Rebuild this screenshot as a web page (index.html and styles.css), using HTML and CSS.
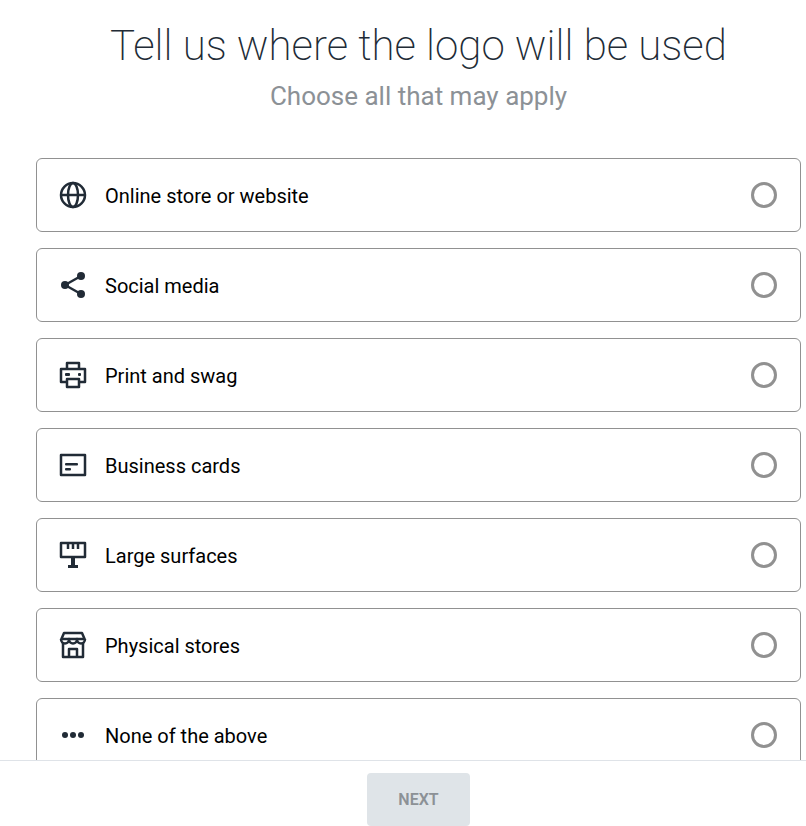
FILE: index.html
```html
<!DOCTYPE html>
<html lang="en">
<head>
<meta charset="utf-8">
<meta name="viewport" content="width=device-width, initial-scale=1">
<title>Logo usage</title>
<link rel="stylesheet" href="styles.css">
</head>
<body>
<form class="page">
  <main class="content">
    <header class="heading">
      <h1 class="title">Tell us where the logo will be used</h1>
      <p class="subtitle">Choose all that may apply</p>
    </header>
    <div class="options">
      <label class="option">
        <svg class="icon" viewBox="0 0 28 28" aria-hidden="true"><g class="line"><circle cx="14" cy="14" r="12"/><ellipse cx="14" cy="14" rx="5" ry="12"/><path d="M2 14h24"/></g></svg>
        <span class="name">Online store or website</span>
        <input class="check" type="checkbox" name="use" value="online">
      </label>
      <label class="option">
        <svg class="icon" viewBox="0 0 28 28" aria-hidden="true"><path class="line" d="M22 5 6 14l16 9"/><circle cx="22" cy="5" r="4"/><circle cx="6" cy="14" r="4"/><circle cx="22" cy="23" r="4"/></svg>
        <span class="name">Social media</span>
        <input class="check" type="checkbox" name="use" value="social">
      </label>
      <label class="option">
        <svg class="icon" viewBox="0 0 28 28" aria-hidden="true"><g class="line"><path d="M8 8V2h12v6"/><path d="M7 21H2V8h24v13h-5"/><path d="M8 18h12v8H8z"/></g><rect x="6" y="12" width="5" height="3" rx="1"/><rect x="19" y="12" width="3" height="3" rx="1"/></svg>
        <span class="name">Print and swag</span>
        <input class="check" type="checkbox" name="use" value="print">
      </label>
      <label class="option">
        <svg class="icon" viewBox="0 0 28 28" aria-hidden="true"><path class="line" d="M2 4h24v20H2z"/><rect x="6" y="12" width="13" height="2.500" rx="1"/><rect x="6" y="17" width="6" height="2.500" rx="1"/></svg>
        <span class="name">Business cards</span>
        <input class="check" type="checkbox" name="use" value="cards">
      </label>
      <label class="option">
        <svg class="icon" viewBox="0 0 28 28" aria-hidden="true"><path class="line" d="M2 2h24v14H2zM9 2v6M14 2v6M19 2v6"/><path d="M12 16h4v8h3v3H9v-3h3z"/></svg>
        <span class="name">Large surfaces</span>
        <input class="check" type="checkbox" name="use" value="surfaces">
      </label>
      <label class="option">
        <svg class="icon" viewBox="0 0 28 28" aria-hidden="true"><g class="line"><path d="M2 9l3-7h18l3 7"/><path d="M2 8h24"/><path d="M2 8c0 6 8 6 8 0 0 6 8 6 8 0 0 6 8 6 8 0"/><path d="M4 12v14h20V12M10 26v-8h8v8"/></g></svg>
        <span class="name">Physical stores</span>
        <input class="check" type="checkbox" name="use" value="stores">
      </label>
      <label class="option">
        <svg class="icon" viewBox="0 0 28 28" aria-hidden="true"><circle cx="6" cy="14" r="3"/><circle cx="14" cy="14" r="3"/><circle cx="22" cy="14" r="3"/></svg>
        <span class="name">None of the above</span>
        <input class="check" type="checkbox" name="use" value="none">
      </label>
    </div>
  </main>
  <footer class="footer">
    <button class="next" type="submit" disabled>NEXT</button>
  </footer>
</form>
</body>
</html>
```
FILE: styles.css
```css
* {
  box-sizing: border-box;
}

body {
  margin: 0;
  background: #fff;
  color: #000;
  font-family: Roboto, "Liberation Sans", sans-serif;
}

.page {
  display: flex;
  flex-direction: column;
  height: 100vh;
}

.content {
  flex: 1;
  min-height: 0;
  padding: 18px 5px 18px 36px;
  overflow-y: auto;
  scrollbar-width: none;
}

.heading {
  margin-bottom: 44px;
  text-align: center;
}

.title {
  margin: 0;
  color: #212b36;
  font-size: 42px;
  font-weight: 200;
  line-height: 56px;
}

.subtitle {
  margin: 4px 0 0;
  color: #8c9196;
  font-size: 26px;
  font-weight: 400;
  line-height: 36px;
}

.options {
  display: flex;
  flex-direction: column;
  gap: 16px;
}

.option {
  display: flex;
  align-items: center;
  gap: 18px;
  min-height: 74px;
  padding: 0 23px 0 22px;
  border: 1px solid #919191;
  border-radius: 6px;
}

.icon {
  flex: none;
  width: 28px;
  height: 28px;
  fill: #212b36;
}

.line {
  fill: none;
  stroke: #212b36;
  stroke-linejoin: round;
  stroke-width: 2.5;
}

.name {
  flex: 1;
  padding-top: 2px;
  font-size: 20px;
  font-weight: 400;
  line-height: 28px;
}

.check {
  flex: none;
  width: 26px;
  height: 26px;
  margin: 0;
  appearance: none;
  border: 3px solid #919191;
  border-radius: 50%;
}

.check:checked {
  background: #212b36;
}

.footer {
  display: flex;
  justify-content: center;
  padding: 12px 5px 0 36px;
  border-top: 1px solid #dfe3e8;
}

.next {
  padding: 0 31px;
  border: 0;
  border-radius: 4px;
  background: #dfe4e8;
  color: #8c9196;
  font: 600 16px/53px Roboto, "Liberation Sans", sans-serif;
}
```
